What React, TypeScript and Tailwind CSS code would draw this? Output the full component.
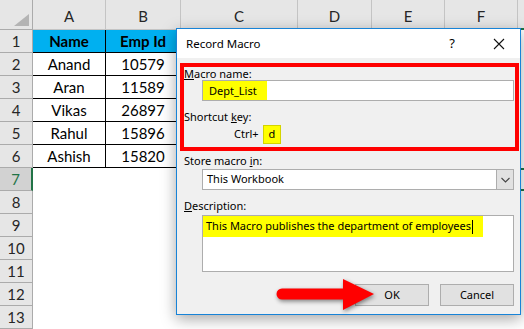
const cols = ["A", "B", "C", "D", "E", "F", ""];

const data: [string, string][] = [
  ["Name", "Emp Id"],
  ["Anand", "10579"],
  ["Aran", "11589"],
  ["Vikas", "26897"],
  ["Rahul", "15896"],
  ["Ashish", "15820"],
];

const rows = Array.from({ length: 13 }, (_, i) => i + 1);

function Sheet() {
  return (
    <div
      className="grid grid-cols-[33px_73px_75px_117px_74px_73px_73px_1fr] grid-rows-[30px_repeat(13,23px)] bg-white text-black"
      style={{ fontFamily: "Lato, 'Liberation Sans', sans-serif" }}
    >
      {/* corner */}
      <div className="relative bg-[#e6e6e6] border-r border-b border-[#ababab]">
        <div className="absolute left-[14px] top-[14px] w-0 h-0 border-l-[15px] border-l-transparent border-b-[12px] border-b-[#b4b4b4]" />
      </div>
      {cols.map((c, i) => (
        <div
          key={"h" + i}
          className={
            i === 6
              ? "bg-[#e6e6e6] border-b-2 border-[#217346]"
              : "flex items-center justify-center pt-[3px] bg-[#e6e6e6] border-r border-b border-[#c4c4c4] text-[15px] text-[#262626]"
          }
        >
          {c}
        </div>
      ))}
      {rows.map((r) => {
        const d = data[r - 1];
        return [
          <div
            key={"r" + r}
            className={
              r === 7
                ? "flex items-center justify-center bg-[#d2d2d2] border-r-2 border-r-[#217346] border-b border-b-[#ababab] text-[15px] text-[#217346]"
                : "flex items-center justify-center bg-[#e6e6e6] border-r border-b border-[#ababab] text-[15px] text-[#262626]"
            }
          >
            {r}
          </div>,
          ...[0, 1].map((j) =>
            d ? (
              <div
                key={r + "-" + j}
                className={
                  r === 1
                    ? "flex items-center justify-center bg-[#00b0f0] border-r border-b border-black text-[15px] font-bold"
                    : "flex items-center justify-center border-r border-b border-black text-[15px]"
                }
              >
                {d[j]}
              </div>
            ) : (
              <div key={r + "-" + j} />
            )
          ),
          <div key={r + "c"} />,
          <div key={r + "d"} />,
          <div key={r + "e"} />,
          <div key={r + "f"} />,
          <div
            key={r + "g"}
            className={r === 7 ? "border-t-2 border-b-2 border-[#217346]" : ""}
          />,
        ];
      })}
    </div>
  );
}

function Dialog() {
  return (
    <div
      className="absolute left-[176px] top-[28px] w-[345px] h-[287px] border border-[#1883d7] bg-[#f0f0f0] shadow-[0_4px_14px_rgba(0,0,0,0.35)] text-[11px] text-black flex flex-col"
      style={{ fontFamily: "'Noto Sans', 'Open Sans', sans-serif" }}
    >
      <div className="h-[29px] bg-white flex items-center pl-[9px]">
        <span className="flex-1 text-[11.5px]">Record Macro</span>
        <span className="w-[20px] text-center text-[13px] mr-[31px]">?</span>
        <svg width="12" height="12" viewBox="0 0 12 12" className="mr-[15px]">
          <path d="M1 1 L11 11 M11 1 L1 11" stroke="#111" strokeWidth="1.1" />
        </svg>
      </div>

      <div className="flex flex-col pl-[7px] pr-[6px]">
        <div className="mt-[5px] ml-[-4px] mr-[-5px] h-[88px] border-4 border-[#ff0000] flex flex-col">
          <div className="leading-[13px]">
            <u>M</u>acro name:
          </div>
          <div className="ml-[18px] mr-[1px] h-[21px] bg-white border border-[#adadad] flex">
            <div className="w-[64px] h-full bg-[#ffff00] pl-[6px] leading-[19px]">Dept_List</div>
          </div>
          <div className="mt-[9px] leading-[14px]">
            Shortcut <u>k</u>ey:
          </div>
          <div className="mt-[1px] ml-[50px] h-[19px] flex items-center">
            <span className="w-[29px]">Ctrl+</span>
            <span className="w-[18px] h-[19px] bg-[#ffff00] border border-[#d4d400] flex items-center justify-center">
              d
            </span>
          </div>
        </div>

        <div className="mt-[3px] leading-[14px]">
          Store macro <u>i</u>n:
        </div>
        <div className="mt-[1px] ml-[18px] h-[21px] bg-white border border-[#adadad] flex items-center">
          <span className="flex-1 pl-[4px]">This Workbook</span>
          <div className="w-[17px] h-full bg-[#e1e1e1] border-l border-[#adadad] flex items-center justify-center">
            <svg width="9" height="6" viewBox="0 0 9 6">
              <path d="M0.5 1 L4.5 5 L8.5 1" stroke="#444" strokeWidth="1.1" fill="none" />
            </svg>
          </div>
        </div>

        <div className="mt-[9px] leading-[14px]">
          <u>D</u>escription:
        </div>
        <div className="mt-[2px] ml-[18px] h-[57px] bg-white border border-[#adadad]">
          <div className="w-[280px] h-[21px] bg-[#ffff00] pl-[3px] flex items-center whitespace-nowrap">
            This Macro publishes the department of employees
            <span className="inline-block w-[1px] h-[14px] bg-black ml-[1px]" />
          </div>
        </div>

        <div className="mt-[12px] flex justify-end gap-[11px]">
          <button className="w-[74px] h-[22px] bg-[#e1e1e1] border border-[#adadad]">OK</button>
          <button className="w-[74px] h-[22px] bg-[#e1e1e1] border border-[#adadad]">Cancel</button>
        </div>
      </div>
    </div>
  );
}

function Arrow() {
  return (
    <svg
      className="absolute left-[268px] top-[274px] drop-shadow-[1px_2px_2px_rgba(0,0,0,0.45)]"
      width="110"
      height="42"
      viewBox="0 0 110 42"
    >
      <line x1="14" y1="20" x2="80" y2="20" stroke="#ff0000" strokeWidth="11" strokeLinecap="round" />
      <polygon points="75,5 106,20 75,36" fill="#ff0000" />
    </svg>
  );
}

export default function App() {
  return (
    <div className="relative w-[524px] h-[329px] overflow-hidden bg-white">
      <Sheet />
      <Dialog />
      <Arrow />
    </div>
  );
}
